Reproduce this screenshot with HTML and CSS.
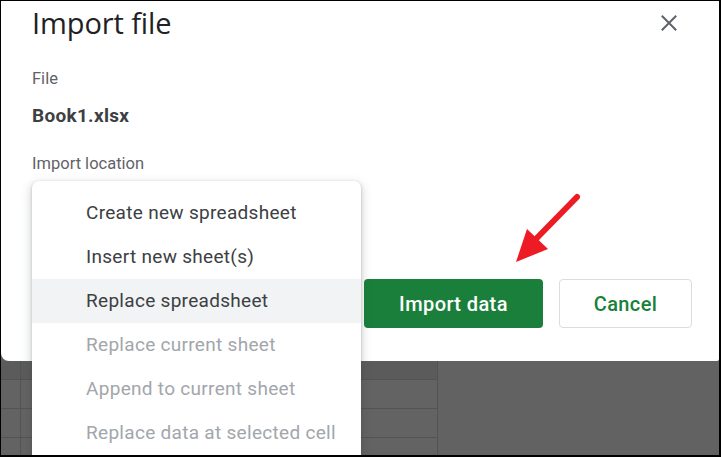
FILE: index.html
```html
<!DOCTYPE html>
<html>
<head>
<meta charset="utf-8">
<link rel="stylesheet" href="styles.css">
</head>
<body>
<div class="frame">
  <div class="dialog">
    <div class="header">
      <h1 class="title">Import file</h1>
      <button class="close" aria-label="Close">
        <svg width="24" height="24" viewBox="0 0 24 24"><path d="M4.8 4.8 L19.2 19.2 M19.2 4.8 L4.8 19.2" stroke="#5f6368" stroke-width="2" fill="none"/></svg>
      </button>
    </div>
    <div class="label first">File</div>
    <div class="filename">Book1.xlsx</div>
    <div class="label second">Import location</div>
    <div class="actions">
      <button class="btn primary">Import data</button>
      <button class="btn secondary">Cancel</button>
    </div>
  </div>
  <div class="backdrop">
    <div class="col rowhead">
      <div class="cell head"></div><div class="cell"></div><div class="cell"></div><div class="cell"></div>
    </div>
    <div class="col cells">
      <div class="cell head"></div><div class="cell"></div><div class="cell"></div><div class="cell"></div>
    </div>
    <div class="col empty"></div>
  </div>
  <ul class="menu">
    <li class="item">Create new spreadsheet</li>
    <li class="item">Insert new sheet(s)</li>
    <li class="item active">Replace spreadsheet</li>
    <li class="item disabled">Replace current sheet</li>
    <li class="item disabled">Append to current sheet</li>
    <li class="item disabled">Replace data at selected cell</li>
  </ul>
  <svg class="arrow" width="718" height="454" viewBox="1 1 718 454">
    <line x1="577" y1="197" x2="532" y2="243" stroke="#ed1c24" stroke-width="6" stroke-linecap="round"/>
    <polygon points="516,262 527,229 548,249" fill="#ed1c24"/>
  </svg>
</div>
</body>
</html>
```

FILE: styles.css
```css
* { box-sizing: border-box; }
html, body { margin: 0; padding: 0; }
body {
  background: #000;
  width: 721px;
  height: 457px;
  overflow: hidden;
  font-family: Roboto, "Liberation Sans", Arial, sans-serif;
}
.frame {
  position: relative;
  margin: 1px 2px 2px 1px;
  width: 718px;
  height: 454px;
  background: #616161;
  display: flex;
  flex-direction: column;
  overflow: hidden;
}
.dialog {
  background: #fff;
  height: 360px;
  flex: none;
  border-bottom-left-radius: 8px;
  border-bottom-right-radius: 2px;
  padding: 2px 38px 0 31px;
  display: flex;
  flex-direction: column;
}
.header {
  display: flex;
  justify-content: space-between;
  align-items: center;
  height: 40px;
}
.title {
  margin: 0;
  font-family: "Open Sans", Roboto, sans-serif;
  font-weight: 400;
  font-size: 29px;
  line-height: 40px;
  color: #202124;
  letter-spacing: -0.1px;
}
.close {
  border: 0;
  background: none;
  padding: 0;
  width: 24px;
  height: 24px;
  display: block;
}
.close svg { display: block; }
.label {
  font-size: 16.5px;
  line-height: 24px;
  color: #5f6368;
}
.label.first { margin-top: 24px; }
.label.second { margin-top: 24px; }
.filename {
  margin-top: 13px;
  font-size: 19px;
  line-height: 24px;
  font-weight: 700;
  letter-spacing: 0.3px;
  color: #3c4043;
}
.actions {
  margin-top: 103px;
  margin-right: -11px;
  display: flex;
  justify-content: flex-end;
  gap: 16px;
}
.btn {
  height: 49px;
  border-radius: 4px;
  font-family: Roboto, sans-serif;
  font-size: 20px;
  font-weight: 500;
  letter-spacing: 0.4px;
  cursor: pointer;
}
.primary {
  width: 179px;
  background: #1a7f3b;
  border: 0;
  color: #fff;
}
.secondary {
  width: 133px;
  background: #fff;
  border: 1px solid #dadce0;
  color: #188038;
}
.backdrop {
  flex: 1;
  display: flex;
}
.col { display: flex; flex-direction: column; }
.rowhead { width: 20px; border-right: 1px solid #535353; }
.cells { width: 417px; border-right: 1px solid #535353; }
.empty { flex: 1; background: #626262; }
.cell { height: 29px; border-bottom: 1px solid #535353; background: #636363; flex: none; }
.cell.head { height: 19px; background: #5b5b5b; }
.menu {
  position: absolute;
  left: 31px;
  top: 180px;
  width: 329px;
  margin: 0;
  padding: 10px 0;
  list-style: none;
  background: #fff;
  border-radius: 7px;
  box-shadow: 0 1px 3px rgba(60,64,67,.3), 0 4px 8px 3px rgba(60,64,67,.15);
}
.item {
  height: 44px;
  line-height: 44px;
  padding-left: 54px;
  font-size: 19px;
  letter-spacing: 0.3px;
  color: #3c4043;
  white-space: nowrap;
}
.item.active { background: #f1f3f4; }
.item.disabled { color: #a2a6ab; }
.arrow {
  position: absolute;
  left: 0;
  top: 0;
}
```
